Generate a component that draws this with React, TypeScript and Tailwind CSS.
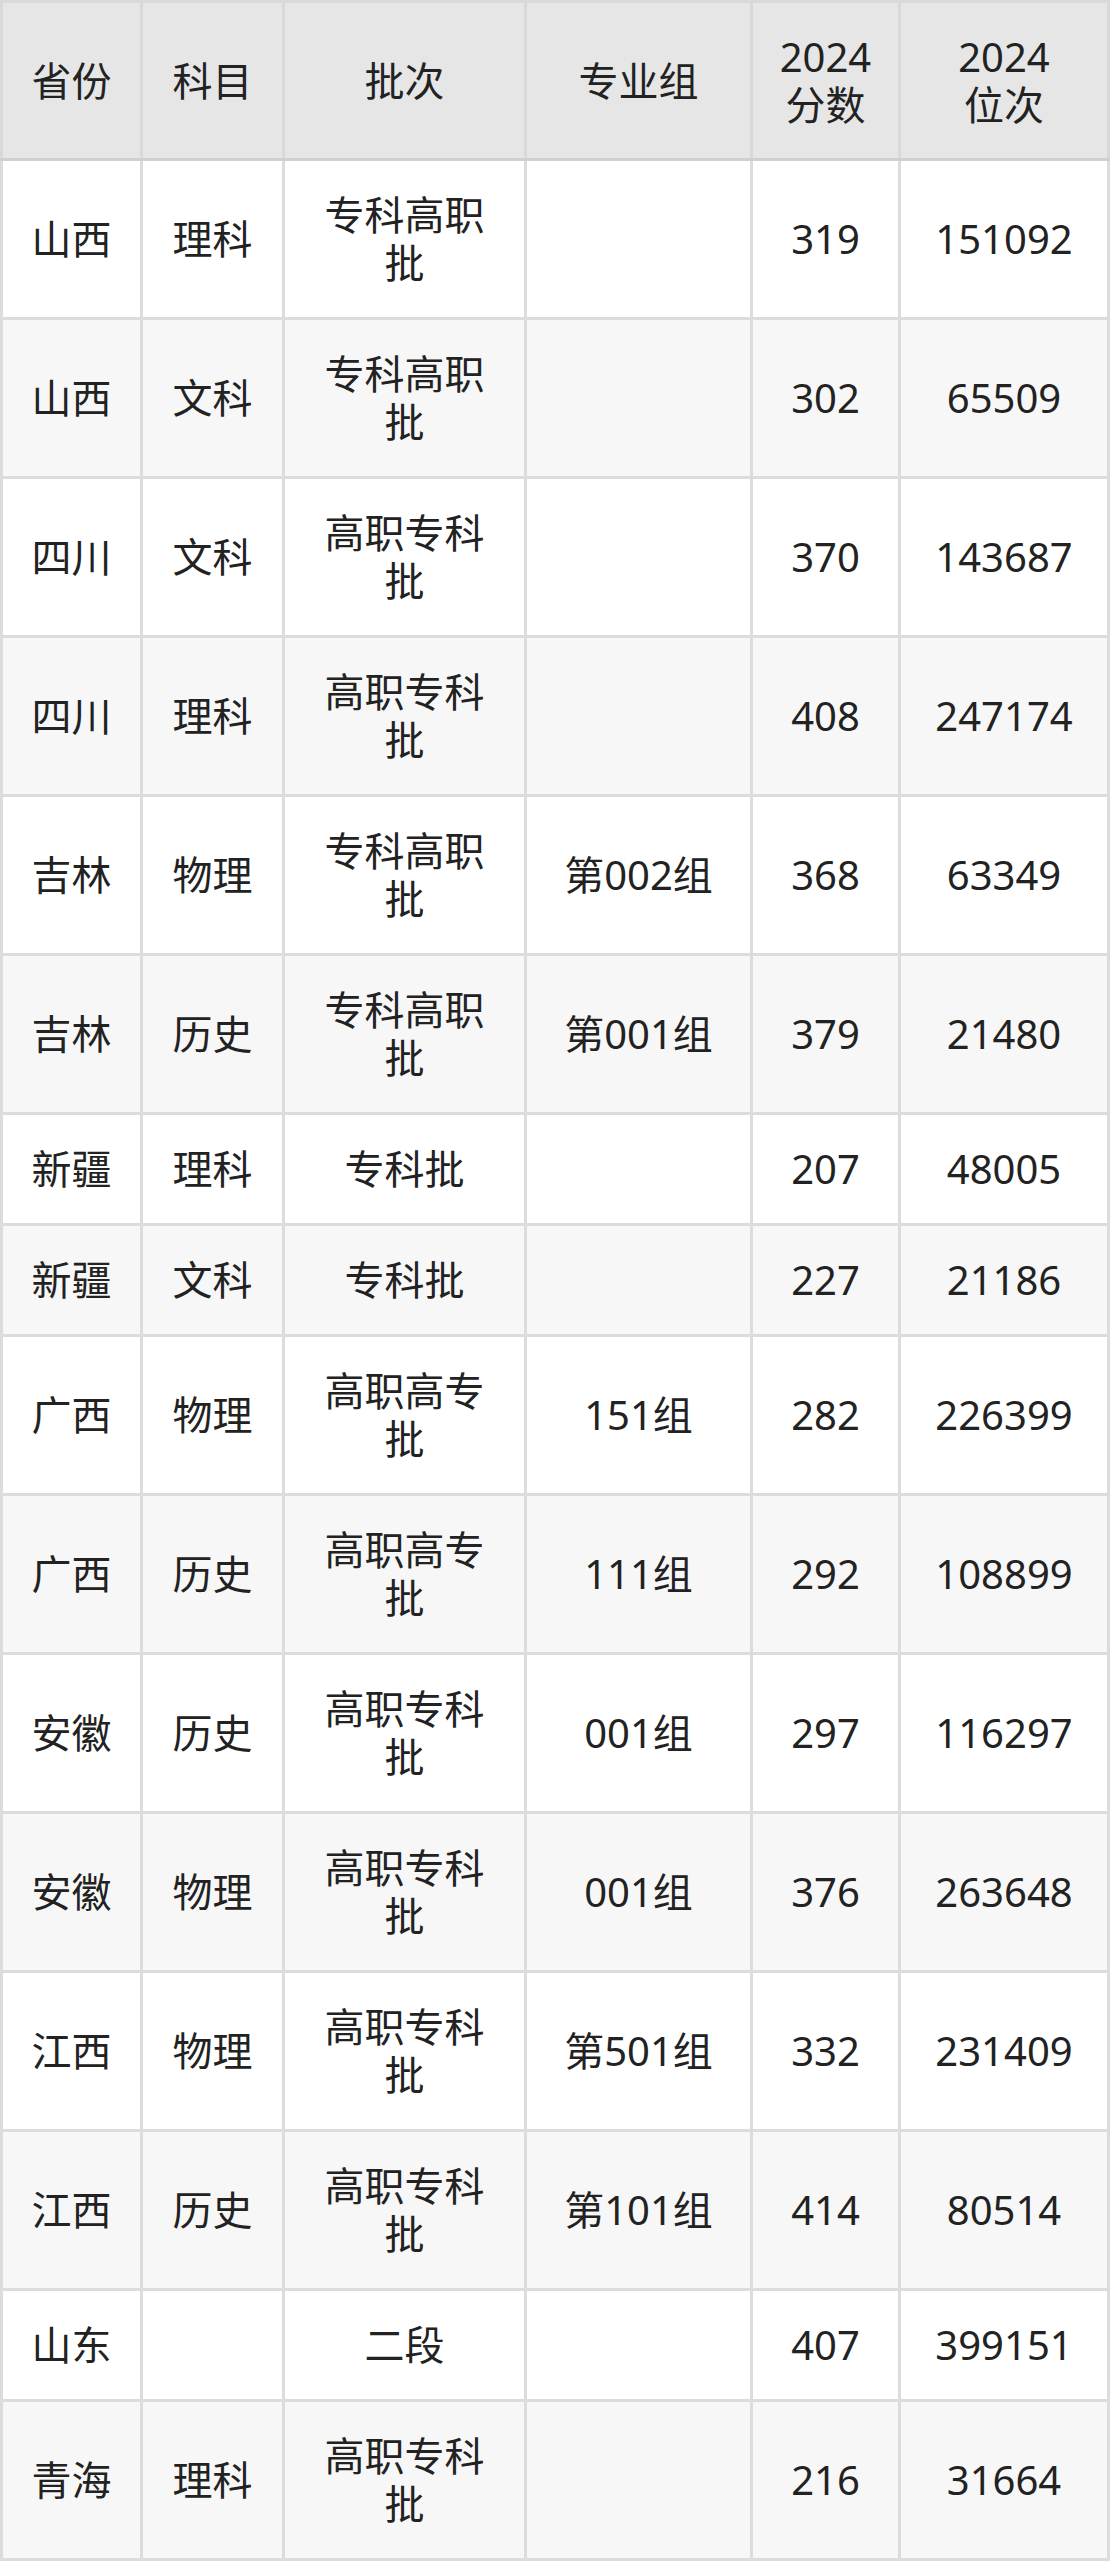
import React from "react"

// 各省分数线表：每格文字用 "|" 分行，和原图的换行位置保持一致
type Row = [string, string, string, string, string, string]

const HEADERS = ["省份", "科目", "批次", "专业组", "2024|分数", "2024|位次"]

const ROWS: Row[] = [
  ["山西", "理科", "专科高职|批", "", "319", "151092"],
  ["山西", "文科", "专科高职|批", "", "302", "65509"],
  ["四川", "文科", "高职专科|批", "", "370", "143687"],
  ["四川", "理科", "高职专科|批", "", "408", "247174"],
  ["吉林", "物理", "专科高职|批", "第002组", "368", "63349"],
  ["吉林", "历史", "专科高职|批", "第001组", "379", "21480"],
  ["新疆", "理科", "专科批", "", "207", "48005"],
  ["新疆", "文科", "专科批", "", "227", "21186"],
  ["广西", "物理", "高职高专|批", "151组", "282", "226399"],
  ["广西", "历史", "高职高专|批", "111组", "292", "108899"],
  ["安徽", "历史", "高职专科|批", "001组", "297", "116297"],
  ["安徽", "物理", "高职专科|批", "001组", "376", "263648"],
  ["江西", "物理", "高职专科|批", "第501组", "332", "231409"],
  ["江西", "历史", "高职专科|批", "第101组", "414", "80514"],
  ["山东", "", "二段", "", "407", "399151"],
  ["青海", "理科", "高职专科|批", "", "216", "31664"],
]

const COL_WIDTHS = ["w-[140px]", "w-[142px]", "w-[242px]", "w-[226px]", "w-[148px]", "w-[209px]"]

function CellText({ text }: { text: string }) {
  if (!text) return null
  const lines = text.split("|")
  return (
    <>
      {lines.map((line, i) => (
        <div key={i} className="whitespace-nowrap">
          {line}
        </div>
      ))}
    </>
  )
}

export default function App() {
  return (
    <div
      className="min-h-screen bg-white text-[#222222]"
      style={{ fontFamily: '"Noto Sans", "Noto Sans CJK SC", sans-serif' }}
    >
      <table className="w-[1107px] table-fixed border-collapse border-[3px] border-[#dcdcdc] text-[40px] leading-[48px]">
        <colgroup>
          {COL_WIDTHS.map((w, i) => (
            <col key={i} className={w} />
          ))}
        </colgroup>
        <thead>
          <tr className="bg-[#e6e6e6]">
            {HEADERS.map((h, i) => (
              <th
                key={i}
                className="border-[3px] border-[#d9d9d9] border-b-[#d0d0d0] px-1 pt-[30px] pb-[29px] text-center font-normal"
              >
                <CellText text={h} />
              </th>
            ))}
          </tr>
        </thead>
        <tbody>
          {ROWS.map((row, r) => (
            <tr key={r} className={r % 2 === 0 ? "bg-white" : "bg-[#f7f7f7]"}>
              {row.map((cell, c) => (
                <td
                  key={c}
                  className="border-[3px] border-[#dcdcdc] px-1 py-[30px] text-center align-middle"
                >
                  <CellText text={cell} />
                </td>
              ))}
            </tr>
          ))}
        </tbody>
      </table>
    </div>
  )
}
